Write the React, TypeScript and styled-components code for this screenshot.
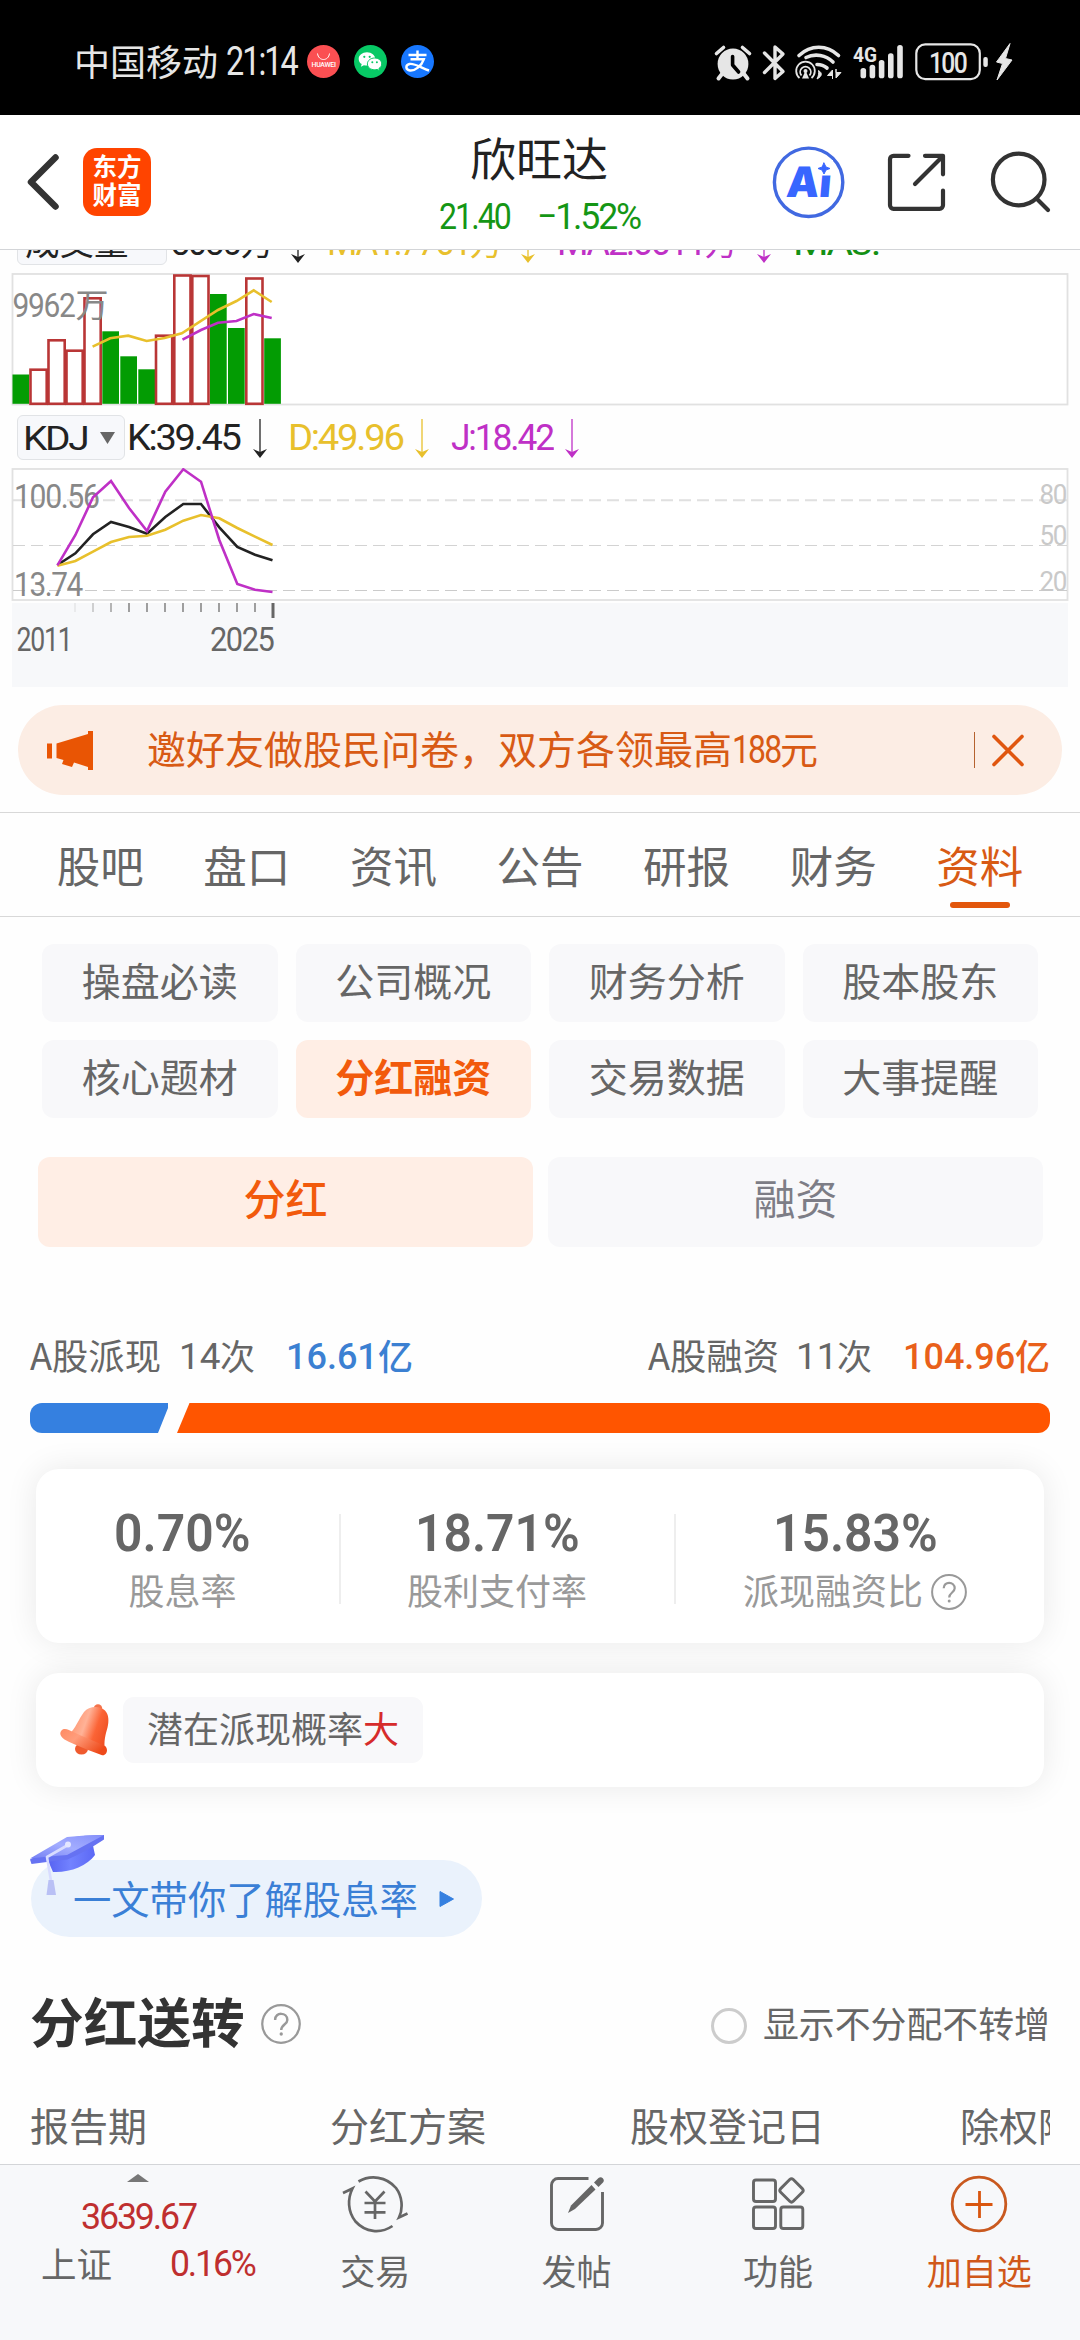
import React, { useLayoutEffect, useRef, useState } from "react";
import styled, { createGlobalStyle, css } from "styled-components";

const CJK = `"Noto Sans CJK SC", "Noto Sans", sans-serif`;
const NUM = `Roboto, "Noto Sans CJK SC", sans-serif`;

const Global = createGlobalStyle`
  * { box-sizing: border-box; }
  body { margin: 0; background: #fff; font-family: ${CJK}; color: #666; }
  svg { display: block; flex: none; }
`;

const Screen = styled.div`
  width: 1080px;
  height: 2340px;
  overflow: hidden;
  display: flex;
  flex-direction: column;
  background: #fefefe;
`;

/* ---------- Fitted text ---------- */
const FitBox = styled.span<{ $w: number; $ml?: number }>`
  display: block;
  flex: none;
  width: ${(p) => p.$w}px;
  margin-left: ${(p) => p.$ml ?? 0}px;
`;
const FitInner = styled.span<{ $size: number; $weight: number; $color?: string; $track: number; $family: string }>`
  display: block;
  width: max-content;
  white-space: nowrap;
  transform-origin: 0 50%;
  font-family: ${(p) => p.$family};
  font-size: ${(p) => p.$size}px;
  font-weight: ${(p) => p.$weight};
  line-height: 1;
  letter-spacing: ${(p) => p.$track}em;
  color: ${(p) => p.$color ?? "inherit"};
`;

type FitProps = {
  w: number;
  size: number;
  ml?: number;
  weight?: number;
  color?: string;
  track?: number;
  family?: string;
  children: React.ReactNode;
};

function Fit({ w, size, ml, weight = 400, color, track = -0.06, family = NUM, children }: FitProps) {
  const ref = useRef<HTMLSpanElement>(null);
  const [k, setK] = useState(1);
  useLayoutEffect(() => {
    if (ref.current) setK(w / ref.current.offsetWidth);
  }, [w, size, children]);
  return (
    <FitBox $w={w} $ml={ml}>
      <FitInner ref={ref} $size={size} $weight={weight} $color={color} $track={track} $family={family} style={{ transform: `scaleX(${k})` }}>
        {children}
      </FitInner>
    </FitBox>
  );
}

const Cn = styled.span<{ $size: number; $weight?: number; $color?: string; $ml?: number; $up?: number }>`
  display: block;
  flex: none;
  white-space: nowrap;
  font-size: ${(p) => p.$size}px;
  font-weight: ${(p) => p.$weight ?? 400};
  line-height: 1;
  color: ${(p) => p.$color ?? "inherit"};
  margin-left: ${(p) => p.$ml ?? 0}px;
  padding-bottom: ${(p) => p.$up ?? 0}px;
`;

/* ---------- Status bar ---------- */
const StatusBar = styled.div`
  height: 115px;
  flex: none;
  background: #000;
  color: #e6e6e6;
  display: flex;
  align-items: center;
  padding: 8px 67px 0 74px;
`;
const StatusApps = styled.div`
  display: flex;
  gap: 14px;
  margin-left: 10px;
`;
const StatusRight = styled.div`
  margin-left: auto;
  display: flex;
  align-items: center;
`;

function StatusIcons() {
  const bars = [
    [860.5, 67],
    [869.6, 63.7],
    [878.8, 59],
    [888, 52.3],
    [897.2, 44],
  ];
  return (
    <svg width="300" height="40" viewBox="713 41 300 40" fill="none" stroke="#e6e6e6">
      <circle cx="733" cy="63" r="15.4" fill="#e6e6e6" stroke="none" />
      <path d="M716.5 52.5l7-6M749.5 52.5l-7-6" strokeWidth="3.6" strokeLinecap="round" />
      <path d="M722 73l-3.5 4.5M744 73l3.5 4.5" strokeWidth="4" strokeLinecap="round" />
      <path d="M732.6 55.5v8.5l6 7" stroke="#000" strokeWidth="3.6" strokeLinecap="round" strokeLinejoin="round" />
      <path d="M764.5 52l18.5 18.5-8 7V46l8 7L764.5 71.5" strokeWidth="3.4" strokeLinejoin="round" strokeLinecap="round" />
      <path d="M799 54.5c11.5-11 28-11 39.5 0" strokeWidth="3.6" strokeLinecap="round" />
      <path d="M806 56.5c9-4.5 20-2.500 27 4.500" strokeWidth="3.6" strokeLinecap="round" />
      <path d="M817 63.5c4 0 7 1 10 3.500" strokeWidth="3.6" strokeLinecap="round" />
      <path d="M799.5 77a9.300 9.300 0 1 1 12 0" strokeWidth="1.8" />
      <path d="M801.5 74.500a5.300 5.300 0 1 1 8 0" strokeWidth="1.8" />
      <path d="M805.5 69.500l3.500 8h-7z" fill="#e6e6e6" stroke="none" />
      <circle cx="805.5" cy="70" r="2" fill="#e6e6e6" stroke="none" />
      <path d="M818.5 69.500c4 2.500 4 5.500-1.500 8.500 1.500-3 2-5.500 1.500-8.500z" fill="#e6e6e6" strokeWidth="1" />
      <path d="M832.5 78v-9l-5 5.500h5zM836 68v9l5-5.500h-5z" fill="#e6e6e6" strokeWidth="1" />
      <text x="853" y="60.5" fontFamily="Roboto" fontWeight="700" fontSize="20.5" textLength="24" lengthAdjust="spacingAndGlyphs" fill="#e6e6e6" stroke="none">
        4G
      </text>
      {bars.map(([x, y]) => (
        <rect key={x} x={x} y={y} width="5.6" height={77.3 - y} rx="2.6" fill="#e6e6e6" stroke="none" />
      ))}
      <rect x="916.3" y="43.3" width="63.5" height="34.8" rx="9" strokeWidth="2.2" />
      <rect x="983.3" y="56" width="4.5" height="10" rx="2" fill="#e6e6e6" stroke="none" />
      <text x="929" y="71.7" fontFamily="Roboto" fontWeight="500" fontSize="29.5" letterSpacing="-2" textLength="37" lengthAdjust="spacingAndGlyphs" fill="#e6e6e6" stroke="none">
        100
      </text>
      <path d="M1010 42.5l-13.5 18.500 6 1.500-5.500 16.500 15-20-6.500-1.500z" fill="#e6e6e6" strokeWidth="1" strokeLinejoin="round" />
    </svg>
  );
}

const AppDots = () => (
  <>
    <svg width="33" height="33" viewBox="0 0 33 33">
      <circle cx="16.5" cy="16.5" r="16.5" fill="#fb4f52" />
      <path d="M10.5 8.500c1 8 11 8 12 0" fill="none" stroke="#fff" strokeWidth="1" />
      <text x="4.5" y="22" fontFamily="Roboto" fontSize="7" fontWeight="500" textLength="24.5" fill="#fff">
        HUAWEI
      </text>
    </svg>
    <svg width="33" height="33" viewBox="0 0 33 33">
      <circle cx="16.5" cy="16.5" r="16.5" fill="#07c965" />
      <path d="M13 7.200c-4.700 0-8.300 3-8.300 6.700 0 2.200 1.100 4 3 5.200l-.8 2.600 3-1.500c1 .3 2 .4 3 .4 4.700 0 8.300-3 8.300-6.700S17.700 7.200 13 7.200z" fill="#fff" />
      <path d="M20.600 13c-4 0-7.200 2.600-7.200 5.900s3.200 5.900 7.200 5.900c.9 0 1.700-.1 2.500-.4l2.500 1.300-.7-2.200c1.700-1.100 2.800-2.700 2.800-4.600 0-3.300-3.100-5.900-7.100-5.900z" fill="#fff" stroke="#07c965" strokeWidth="1" />
      <g fill="#07c965">
        <circle cx="10.3" cy="11.8" r="1.1" />
        <circle cx="15.7" cy="11.8" r="1.1" />
        <circle cx="18.3" cy="17.2" r="1" />
        <circle cx="22.9" cy="17.2" r="1" />
      </g>
    </svg>
    <svg width="33" height="33" viewBox="0 0 33 33">
      <circle cx="16.5" cy="16.5" r="16.5" fill="#1777ff" />
      <g fill="none" stroke="#fff" strokeWidth="2.4">
        <path d="M7.5 10h18M16.5 5.500V14M9.500 14.300h13.300C20.500 21 14 26 9 25.500c-4.500-.5-5-5.500-.5-6.500 5-1 12 4 19.500 6.500" />
      </g>
    </svg>
  </>
);

/* ---------- Header ---------- */
const Header = styled.header`
  height: 135px;
  flex: none;
  display: grid;
  grid-template-columns: 1fr auto 1fr;
  align-items: center;
  background: #fff;
  border-bottom: 1px solid #d3d5d8;
`;
const HeaderLeft = styled.div`
  display: flex;
  align-items: center;
  padding-left: 26px;
  gap: 23px;
`;
const Logo = styled.div`
  width: 68px;
  height: 68px;
  border-radius: 14px;
  background: #ff4400;
  color: #fff;
  font-size: 24.5px;
  font-weight: 700;
  line-height: 28px;
  text-align: center;
  padding-top: 4px;
`;
const HeaderTitle = styled.div`
  display: flex;
  flex-direction: column;
  align-items: center;
  gap: 19px;
  padding: 3px 2px 0 0;
`;
const QuoteRow = styled.div`
  display: flex;
  width: 201px;
  height: 36px;
  align-items: center;
  justify-content: space-between;
  color: #159615;
`;
const HeaderRight = styled.div`
  display: flex;
  align-items: center;
  justify-content: flex-end;
  padding-right: 29px;
`;

function HeaderIcons() {
  return (
    <svg width="280" height="76" viewBox="771 144 280 76" fill="none" stroke="#333" strokeWidth="4.2" strokeLinecap="round" strokeLinejoin="round">
      <circle cx="808.6" cy="182.3" r="34.2" stroke="#4169e1" strokeWidth="3.4" />
      <g transform="translate(785.5 196.5) skewX(-5)">
        <text x="0" y="0" fontFamily="Inter" fontWeight="900" fontSize="42" textLength="45" lengthAdjust="spacingAndGlyphs" fill="#3866ff" stroke="none">
          Ai
        </text>
      </g>
      <rect x="815" y="160" width="18" height="15.5" fill="#fff" stroke="none" />
      <path d="M824 163l2 4 4 1.500-4 1.500-2 4-2-4-4-1.500 4-1.500z" fill="#3866ff" stroke="#3866ff" strokeWidth="1" />
      <path d="M908.5 155.800h-15a3.500 3.500 0 0 0-3.500 3.500v46a3.500 3.500 0 0 0 3.500 3.500h46a3.500 3.500 0 0 0 3.500-3.500V190.500M925 155.800h18v18.500M942 157l-27 27" />
      <circle cx="1018.7" cy="179.5" r="25.8" />
      <path d="M1036.5 198.500l11.500 11.500" />
    </svg>
  );
}

/* ---------- Indicator legends ---------- */
const LegendClip = styled.div`
  height: 23px;
  flex: none;
  overflow: hidden;
  display: flex;
  align-items: flex-end;
  padding-bottom: 8px;
`;
const LegendRow = styled.div<{ $mt?: number; $mb?: number }>`
  height: 45px;
  flex: none;
  display: flex;
  align-items: center;
  padding-left: 17px;
  margin-top: ${(p) => p.$mt ?? 0}px;
  margin-bottom: ${(p) => p.$mb ?? 0}px;
`;
const Picker = styled.div<{ $w: number }>`
  width: ${(p) => p.$w}px;
  height: 45px;
  flex: none;
  border: 1px solid #e1e3e6;
  border-radius: 6px;
  background: #f7f8fb;
  display: flex;
  align-items: center;
  justify-content: space-between;
  padding: 0 9px 0 5px;
  color: #222;
`;
const ArrowSvg = styled.svg<{ $ml: number }>`
  margin-left: ${(p) => p.$ml}px;
`;
const DownArrow = ({ color, ml }: { color: string; ml: number }) => (
  <ArrowSvg $ml={ml} width="14" height="40" viewBox="0 0 14 40">
    <path d="M7 1v36" stroke={color} strokeWidth="1.3" />
    <path d="M0 31l7 3 7-3-7 9z" fill={color} />
  </ArrowSvg>
);
const Triangle = () => (
  <svg width="15" height="12" viewBox="0 0 15 12">
    <path d="M0 0h15L7.5 12z" fill="#666" />
  </svg>
);

const Y = "#e8c02c";
const P = "#bf30c6";
const G = "#149014";
const K = "#222";

/* ---------- Charts ---------- */
const bars: [number, number, boolean][] = [
  [12.5, 374.5, false],
  [30.5, 368.7, true],
  [48.5, 339.3, true],
  [66.5, 349.7, true],
  [84.5, 297.3, true],
  [102.3, 331.3, false],
  [120.3, 356.3, false],
  [138.3, 369.3, false],
  [156, 334.7, true],
  [174.3, 274.5, true],
  [192.3, 275, true],
  [210, 294, false],
  [228, 328, false],
  [246.3, 277.5, true],
  [264.2, 338.3, false],
];

const Label = ({ x, y, w, size = 33, fill = "#888", children }: { x: number; y: number; w: number; size?: number; fill?: string; children: string }) => (
  <text x={x} y={y} textLength={w} lengthAdjust="spacingAndGlyphs" letterSpacing="-1.5" fontFamily="Roboto" fontWeight="400" fontSize={size} fill={fill}>
    {children}
  </text>
);

function VolumeChart() {
  return (
    <svg width="1080" height="133" viewBox="0 273 1080 133">
      <rect x="12.5" y="274" width="1055" height="130.5" fill="#fff" stroke="#e1e1e1" strokeWidth="1.8" />
      {bars.map(([x, y, up]) =>
        up ? (
          <rect key={x} x={x} y={y + 1} width="16.2" height={402.8 - y} fill="#fff" stroke="#b93636" strokeWidth="2.6" />
        ) : (
          <rect key={x} x={x} y={y} width="16.7" height={403.8 - y} fill="#039c03" />
        )
      )}
      <Label x={12.5} y={317.3} w={62} size={34}>9962</Label>
      <text x="75.5" y="317" fontFamily="Noto Sans CJK SC" fontSize="33" fill="#888">万</text>
      <polyline fill="none" stroke={Y} strokeWidth="2.6" points="92.6,346.7 110.2,338.3 128.2,335.7 146.6,341 164.6,338 181.8,333.3 218,310 236.5,301 253.7,290.3 271.7,302" />
      <polyline fill="none" stroke={P} strokeWidth="2.6" points="182.5,339.7 201,330 218,322.7 236.5,321 253.7,314 271.7,318" />
    </svg>
  );
}

function KdjChart() {
  return (
    <svg width="1080" height="219" viewBox="0 468 1080 219">
      <rect x="12.5" y="469" width="1055" height="131" fill="#fff" stroke="#e1e1e1" strokeWidth="1.8" />
      <path d="M13 500.200h1054" stroke="#e0e0e0" strokeWidth="2" strokeDasharray="12 6" />
      <path d="M13 545.500h1054" stroke="#d3d3d3" strokeWidth="1.2" strokeDasharray="12 6" />
      <path d="M13 590.500h1054" stroke="#cbcbcb" strokeWidth="1.2" strokeDasharray="12 6" />
      <rect x="12" y="603" width="1056" height="84" fill="#f7f8fa" />
      {Array.from({ length: 11 }, (_, i) => (
        <path key={i} d={`M${75 + i * 18} 603v9`} stroke="#888" strokeWidth="1.6" opacity={Math.min(1, 0.15 + i * 0.3)} />
      ))}
      <path d="M273 603v15" stroke="#666" strokeWidth="3" />
      <Label x={14} y={507.7} w={84.5}>100.56</Label>
      <Label x={14} y={595.7} w={68}>13.74</Label>
      <g fill="none" strokeWidth="2.6">
        <polyline stroke={K} points="57.4,565 75.4,553.3 93,534.3 111,522 129,527 147,533.7 165.3,517 183.3,504 201,504 219.3,527.3 237.3,547 255,554.7 272.5,560.3" />
        <polyline stroke={Y} points="57.4,565.7 75.4,561 93,551.7 111,542 129,537 147,535.7 165.3,529.7 183.3,520.7 201,515 219.3,518.3 237.3,528 255,536.7 272.5,545" />
        <polyline stroke={P} points="57.4,565.3 75.4,535 93,497.3 111,481 129,508 147,531 165.3,491.7 183.3,469.3 201,481.7 219.3,540 237.3,584 255,589.7 272.5,592" />
      </g>
      <Label x={1039.5} y={504} w={26.5} size={28.5} fill="#c9c9c9">80</Label>
      <Label x={1039.5} y={545.3} w={26.5} size={28.5} fill="#c9c9c9">50</Label>
      <Label x={1039.5} y={591} w={26.5} size={28.5} fill="#c9c9c9">20</Label>
      <Label x={16.5} y={651} w={55} fill="#666">2011</Label>
      <Label x={210} y={651} w={63.5} fill="#666">2025</Label>
    </svg>
  );
}

/* ---------- Banner ---------- */
const Banner = styled.div`
  height: 90px;
  flex: none;
  margin: 18px 18px 17px;
  border-radius: 45px;
  background: #fcede4;
  color: #d85a14;
  display: flex;
  align-items: center;
  padding: 0 38px 0 29px;
`;
const BannerText = styled.div`
  display: flex;
  align-items: center;
  margin-left: 54px;
`;
const BannerEnd = styled.div`
  margin-left: auto;
  display: flex;
  align-items: center;
  gap: 17px;
  &::before {
    content: "";
    width: 1px;
    height: 36px;
    background: #b5622f;
  }
`;

/* ---------- Tabs ---------- */
const Tabs = styled.nav`
  height: 105px;
  flex: none;
  display: flex;
  padding: 0 27px;
  border-top: 1px solid #d8d8d8;
  border-bottom: 1px solid #d8d8d8;
`;
const Tab = styled.div<{ $on?: boolean }>`
  flex: 1;
  display: flex;
  flex-direction: column;
  align-items: center;
  padding-top: 30px;
  font-size: 43.5px;
  line-height: 44px;
  color: ${(p) => (p.$on ? "#d85a14" : "#666")};
  ${(p) =>
    p.$on &&
    css`
      &::after {
        content: "";
        width: 60px;
        height: 6px;
        margin-top: 15px;
        border-radius: 3px;
        background: #e2560c;
      }
    `}
`;

/* ---------- Chips ---------- */
const ChipGrid = styled.div`
  flex: none;
  display: grid;
  grid-template-columns: repeat(4, 1fr);
  gap: 18px;
  padding: 27px 42px 39px;
`;
const Chip = styled.div<{ $on?: boolean }>`
  height: 78px;
  border-radius: 12px;
  display: flex;
  align-items: center;
  justify-content: center;
  padding-bottom: 8px;
  font-size: 39px;
  line-height: 1;
  background: ${(p) => (p.$on ? "#ffeee5" : "#f8f8fa")};
  color: ${(p) => (p.$on ? "#f25a0c" : "#666")};
  font-weight: ${(p) => (p.$on ? 700 : 400)};
`;
const Segments = styled.div`
  flex: none;
  display: grid;
  grid-template-columns: 1fr 1fr;
  gap: 15px;
  padding: 0 37px 0 38px;
`;
const Segment = styled(Chip)`
  height: 90px;
  font-size: 42px;
  padding-bottom: 10px;
  color: ${(p) => (p.$on ? "#f25a0c" : "#7d7d86")};
  font-weight: ${(p) => (p.$on ? 500 : 400)};
`;

/* ---------- Summary ---------- */
const SummaryRow = styled.div`
  height: 48px;
  flex: none;
  margin-top: 86px;
  display: flex;
  justify-content: space-between;
  padding: 0 30px;
`;
const SummarySide = styled.div`
  display: flex;
  align-items: center;
`;
const RatioBar = styled.div`
  height: 30px;
  flex: none;
  margin: 22px 30px 0;
  display: flex;
  border-radius: 12px;
  overflow: hidden;
`;
const RatioPart = styled.div<{ $kind: "paid" | "raised" }>`
  ${(p) =>
    p.$kind === "paid"
      ? css`
          width: 138px;
          background: #3580e0;
          clip-path: polygon(0 0, 100% 0, 100% 17%, 128px 100%, 0 100%);
        `
      : css`
          flex: 1;
          margin-left: 9px;
          background: #ff5500;
          clip-path: polygon(12.5px 0, 100% 0, 100% 100%, 0 100%);
        `}
`;

const Card = styled.section<{ $mt: number; $h: number; $pl?: number }>`
  flex: none;
  height: ${(p) => p.$h}px;
  margin: ${(p) => p.$mt}px 36px 0;
  padding-left: ${(p) => p.$pl ?? 0}px;
  border-radius: 23px;
  background: #fff;
  box-shadow: 0 0 32px rgba(0, 0, 0, 0.085);
  display: flex;
  align-items: center;
`;
const Stat = styled.div<{ $w: number; $ml?: number }>`
  width: ${(p) => p.$w}px;
  margin-left: ${(p) => p.$ml ?? 0}px;
  flex: none;
  height: 100%;
  padding-top: 39px;
  display: flex;
  flex-direction: column;
  align-items: center;
  gap: 12px;
`;
const StatLabel = styled.div`
  display: flex;
  align-items: center;
  color: #999;
  height: 36px;
`;
const Rule = styled.div<{ $ml: number }>`
  width: 2px;
  height: 90px;
  margin: 6px 0 0 ${(p) => p.$ml}px;
  background: #eeeeee;
`;
const HintChip = styled.div`
  display: flex;
  align-items: center;
  width: 300px;
  height: 66px;
  margin-left: 13px;
  padding: 0 0 7px 24px;
  border-radius: 11px;
  background: #f8f8fa;
`;

const HelpSvg = styled.svg<{ $ml: number; $mt: number }>`
  margin: ${(p) => p.$mt}px 0 0 ${(p) => p.$ml}px;
`;
const Help = ({ size, ml, mt = 0 }: { size: number; ml: number; mt?: number }) => (
  <HelpSvg $ml={ml} $mt={mt} width={size} height={size} viewBox="0 0 36 36" fill="none" stroke="#999" strokeWidth="2">
    <circle cx="18" cy="18" r="16.9" />
    <path d="M12.7 14.300c0-7.500 11-7 11 0 0 4.300-5.500 4.200-5.500 9.200" strokeWidth="2.2" />
    <circle cx="18.2" cy="27" r="1.5" fill="#999" stroke="none" />
  </HelpSvg>
);

const Bell = () => (
  <svg width="50" height="52" viewBox="60 1704.5 50 52">
    <defs>
      <linearGradient id="bell" x1="0" y1="0.2" x2="1" y2="0.6">
        <stop offset="0.15" stopColor="#ff9a76" />
        <stop offset="0.42" stopColor="#ffb297" />
        <stop offset="0.7" stopColor="#fb6436" />
        <stop offset="1" stopColor="#ee4f22" />
      </linearGradient>
      <linearGradient id="rim" x1="0" y1="0" x2="1" y2="0.6">
        <stop offset="0" stopColor="#ff8a62" />
        <stop offset="0.4" stopColor="#ff9d7c" />
        <stop offset="1" stopColor="#ee4a1a" />
      </linearGradient>
    </defs>
    <ellipse cx="81.5" cy="1749.5" rx="6.5" ry="5.5" fill="#ef5a2e" />
    <circle cx="98" cy="1709" r="4.2" fill="#f4734b" />
    <path d="M84 1712.500c5-6.500 16-6.500 21-1.500 4 4 4 11 2.500 17-2 7-4 14-2.500 23L69 1735c6-5 10-16 15-22.500z" fill="url(#bell)" />
    <path d="M61.5 1731c-2.500 3-1 6.500 3 9 11 6 25 11 37 15.500 5 1.500 7.500-6 3.500-9-10-5-22-9-32-14-4-2-8.500-4.500-11.500-1.500z" fill="url(#rim)" />
  </svg>
);

/* ---------- Guide link ---------- */
const GuideLink = styled.div`
  position: relative;
  flex: none;
  width: 451px;
  height: 77px;
  margin: 73px 0 0 31px;
  border-radius: 39px;
  background: #eaf2fc;
  display: flex;
  align-items: center;
  gap: 21px;
  padding: 0 0 0 42px;
`;
const CapBadge = styled.div`
  position: absolute;
  left: -1px;
  top: -25px;
`;
const Cap = () => (
  <svg width="74" height="61" viewBox="30 1835 74 61">
    <defs>
      <linearGradient id="capTop" x1="0" y1="1" x2="1" y2="0">
        <stop offset="0" stopColor="#7580f4" />
        <stop offset="0.5" stopColor="#a3adff" />
        <stop offset="1" stopColor="#8590fa" />
      </linearGradient>
      <linearGradient id="capBase" x1="0" y1="0" x2="1" y2="0">
        <stop offset="0" stopColor="#5560f0" />
        <stop offset="0.5" stopColor="#7282ff" />
        <stop offset="1" stopColor="#5c68f5" />
      </linearGradient>
    </defs>
    <path d="M46 1856l46-15 3 14c-8 11-26 18-42 17z" fill="url(#capBase)" />
    <path d="M30 1859.500l38-21.500q17-3 36-3v4.500q-18 12-36.500 20-17 2-36 4.500z" fill="#6672f2" />
    <path d="M30 1858.500l37-21.500q18-2 37-2l-37 20q-18 1-37 3.500z" fill="url(#capTop)" />
    <path d="M68 1845l-21 12 4 24" fill="none" stroke="#d8dcff" strokeWidth="2.6" strokeLinejoin="round" />
    <circle cx="68" cy="1844.5" r="3" fill="#e4e7ff" />
    <path d="M48.5 1880h5l2.500 15h-9.500z" fill="#b9c0f5" />
  </svg>
);

/* ---------- Section ---------- */
const SectionHead = styled.div`
  height: 60px;
  flex: none;
  margin-top: 56px;
  display: flex;
  align-items: center;
  padding: 0 30px;
`;
const Toggle = styled.div`
  margin-left: auto;
  display: flex;
  align-items: center;
`;
const Radio = styled.span`
  width: 36px;
  height: 36px;
  border: 3px solid #ccc;
  border-radius: 50%;
  margin-top: 5px;
`;
const TableHead = styled.div`
  height: 60px;
  flex: none;
  margin: 44px 30px 7px;
  display: grid;
  grid-template-columns: 300px 300px 330px 300px;
  align-items: center;
  overflow: hidden;
`;

/* ---------- Bottom bar ---------- */
const BottomBar = styled.footer`
  flex: none;
  height: 176px;
  border-top: 1px solid #d3d5d8;
  background: #f7f8fa;
  display: flex;
`;
const IndexBox = styled.div`
  width: 274.5px;
  flex: none;
  display: flex;
  flex-direction: column;
  padding-top: 9px;
`;
const CaretRow = styled.div`
  padding-left: 127px;
`;
const IndexRow = styled.div<{ $mt: number }>`
  display: flex;
  align-items: center;
  height: 36px;
  margin-top: ${(p) => p.$mt}px;
`;
const Action = styled.div<{ $on?: boolean }>`
  flex: 1;
  display: flex;
  flex-direction: column;
  align-items: center;
  padding-top: 8px;
  gap: 17px;
  font-size: 35px;
  line-height: 36px;
  color: ${(p) => (p.$on ? "#d0581a" : "#666")};
`;

const TradeIcon = () => (
  <svg width="66" height="62" viewBox="342.5 2173 66 62" fill="none" stroke="#666" strokeWidth="2.7">
    <path d="M359 2181.500c12-7 28-5 37.500 6.500 6 8 7.500 20 3 29.500l8.500-4" />
    <path d="M393 2226c-12 8-27 6.500-37-4.500-8-10-8-23-3-33l-9.500 4.500" />
    <path d="M366 2191.500l9.500 10 9.500-10M365 2203h21M365 2212.300h21M375.500 2201v18" />
  </svg>
);
const PostIcon = () => (
  <svg width="56" height="62" viewBox="549 2173 56 62" fill="none" stroke="#666" strokeWidth="2.9">
    <path d="M588.5 2178.500H558a6.500 6.500 0 0 0-6.500 6.500v38a6.500 6.500 0 0 0 6.500 6.500h38a6.500 6.500 0 0 0 6.500-6.500v-31" />
    <path d="M568 2213l3-7.500 20.500-20.500 4 4.500L575 2209z" fill="#666" stroke="none" />
    <path d="M594 2182.500l4.500-4.500c3-2.500 7 1.500 4.500 4.500l-4.500 4.500z" fill="#666" stroke="none" />
  </svg>
);
const GridIcon = () => (
  <svg width="54" height="62" viewBox="751 2173 54 62" fill="none" stroke="#666" strokeWidth="2.9">
    <rect x="753.5" y="2180" width="22" height="21.5" rx="2.5" />
    <rect x="753.5" y="2207" width="22" height="21.5" rx="2.5" />
    <rect x="780.8" y="2207" width="22" height="21.5" rx="2.5" />
    <rect x="782.6" y="2181.5" width="17.8" height="17.8" rx="2.5" transform="rotate(45 791.5 2190.4)" />
  </svg>
);
const AddIcon = () => (
  <svg width="60" height="62" viewBox="949 2173 60 62" fill="none" stroke="#c9591f" strokeWidth="2.8">
    <circle cx="979" cy="2204" r="26.8" />
    <path d="M965.5 2204.500h27M979.500 2191v27" stroke="#d9560f" />
  </svg>
);

const chips = ["操盘必读", "公司概况", "财务分析", "股本股东", "核心题材", "分红融资", "交易数据", "大事提醒"];

export default function App() {
  return (
    <>
      <Global />
      <Screen>
        <StatusBar>
          <Cn $size={36} $up={3}>中国移动</Cn>
          <Fit w={71} size={41} ml={8}>21:14</Fit>
          <StatusApps>
            <AppDots />
          </StatusApps>
          <StatusRight>
            <StatusIcons />
          </StatusRight>
        </StatusBar>

        <Header>
          <HeaderLeft>
            <svg width="34" height="58" viewBox="0 0 34 58" fill="none" stroke="#333" strokeWidth="6.5" strokeLinecap="round" strokeLinejoin="round">
              <path d="M29.5 4.500L5 29l24.500 24.500" />
            </svg>
            <Logo>
              东方
              <br />
              财富
            </Logo>
          </HeaderLeft>
          <HeaderTitle>
            <Cn $size={46} $color="#222">欣旺达</Cn>
            <QuoteRow>
              <Fit w={71} size={37}>21.40</Fit>
              <Fit w={103} size={37}>−1.52%</Fit>
            </QuoteRow>
          </HeaderTitle>
          <HeaderRight>
            <HeaderIcons />
          </HeaderRight>
        </Header>

        <LegendClip>
          <LegendRow>
            <Picker $w={150}>
              <Cn $size={34.5} $up={4} $ml={2}>成交量</Cn>
              <Triangle />
            </Picker>
            <Fit w={68} size={36} ml={4} color={K}>8085</Fit>
            <Cn $size={33} $color={K} $ml={2} $up={2}>万</Cn>
            <DownArrow color={K} ml={17} />
            <Fit w={143} size={36} ml={22} color={Y}>MA1:7761</Fit>
            <Cn $size={33} $color={Y} $up={2}>万</Cn>
            <DownArrow color={Y} ml={18} />
            <Fit w={148} size={36} ml={22} color={P}>MA2:6611</Fit>
            <Cn $size={33} $color={P} $up={2}>万</Cn>
            <DownArrow color={P} ml={19} />
            <Fit w={86} size={36} ml={22} color={G}>MA3:</Fit>
          </LegendRow>
        </LegendClip>
        <VolumeChart />
        <LegendRow $mt={9} $mb={8}>
          <Picker $w={108}>
            <Fit w={64} size={34}>KDJ</Fit>
            <Triangle />
          </Picker>
          <Fit w={113} size={36} ml={2} color={K}>K:39.45</Fit>
          <DownArrow color={K} ml={13} />
          <Fit w={115} size={36} ml={21} color={Y}>D:49.96</Fit>
          <DownArrow color={Y} ml={12} />
          <Fit w={102} size={36} ml={22} color={P}>J:18.42</Fit>
          <DownArrow color={P} ml={12} />
        </LegendRow>
        <KdjChart />

        <Banner>
          <svg width="46" height="39" viewBox="0 0 46 39" fill="#e95504">
            <path d="M0 12.500h5v15H0zM9.500 12.500L41 3V0h5v39h-5v-3l-14-4.500-2 4.500-10-3 1.500-4-7-2z" />
          </svg>
          <BannerText>
            <Cn $size={39} $up={5}>邀好友做股民问卷，双方各领最高</Cn>
            <Fit w={48} size={38}>188</Fit>
            <Cn $size={38} $up={5}>元</Cn>
          </BannerText>
          <BannerEnd>
            <svg width="32" height="33" viewBox="0 0 32 33" stroke="#e0560f" strokeWidth="3.6" strokeLinecap="round">
              <path d="M2 2.500l28 28M30 2.500l-28 28" />
            </svg>
          </BannerEnd>
        </Banner>

        <Tabs>
          {["股吧", "盘口", "资讯", "公告", "研报", "财务", "资料"].map((t) => (
            <Tab key={t} $on={t === "资料"}>{t}</Tab>
          ))}
        </Tabs>

        <ChipGrid>
          {chips.map((t) => (
            <Chip key={t} $on={t === "分红融资"}>{t}</Chip>
          ))}
        </ChipGrid>
        <Segments>
          <Segment $on>分红</Segment>
          <Segment>融资</Segment>
        </Segments>

        <SummaryRow>
          <SummarySide>
            <Cn $size={36.3} $up={5}>A股派现</Cn>
            <Fit w={41} size={36} ml={18} track={0}>14</Fit>
            <Cn $size={35} $up={5}>次</Cn>
            <Fit w={92} size={36} ml={31} weight={500} track={0} color="#3b80d2">16.61</Fit>
            <Cn $size={35} $up={5} $weight={500} $color="#3b80d2">亿</Cn>
          </SummarySide>
          <SummarySide>
            <Cn $size={36.3} $up={5}>A股融资</Cn>
            <Fit w={41} size={36} ml={17} track={0}>11</Fit>
            <Cn $size={35} $up={5}>次</Cn>
            <Fit w={112} size={36} ml={31} weight={500} track={0} color="#e9601a">104.96</Fit>
            <Cn $size={35} $up={5} $weight={500} $color="#e9601a">亿</Cn>
          </SummarySide>
        </SummaryRow>
        <RatioBar>
          <RatioPart $kind="paid" />
          <RatioPart $kind="raised" />
        </RatioBar>

        <Card $mt={36} $h={174}>
          <Stat $w={293}>
            <Fit w={137} size={51} weight={600} track={0}>0.70%</Fit>
            <StatLabel><Cn $size={36}>股息率</Cn></StatLabel>
          </Stat>
          <Rule $ml={10} />
          <Stat $w={312}>
            <Fit w={165} size={51} weight={600} track={0}>18.71%</Fit>
            <StatLabel><Cn $size={36}>股利支付率</Cn></StatLabel>
          </Stat>
          <Rule $ml={21} />
          <Stat $w={358}>
            <Fit w={165} size={51} weight={600} track={0}>15.83%</Fit>
            <StatLabel>
              <Cn $size={36}>派现融资比</Cn>
              <Help size={36} ml={8} mt={5} />
            </StatLabel>
          </Stat>
        </Card>

        <Card $mt={30} $h={114} $pl={24}>
          <Bell />
          <HintChip>
            <Cn $size={36}>潜在派现概率</Cn>
            <Cn $size={36} $color="#d62b2b">大</Cn>
          </HintChip>
        </Card>

        <GuideLink>
          <CapBadge><Cap /></CapBadge>
          <Cn $size={38.3} $color="#3a7fd6">一文带你了解股息率</Cn>
          <svg width="16" height="18" viewBox="0 0 16 18">
            <path d="M1 1.500L14.500 9 1 16.500z" fill="#3580e0" stroke="#3580e0" strokeLinejoin="round" />
          </svg>
        </GuideLink>

        <SectionHead>
          <Cn $size={53.7} $weight={700} $color="#333" $up={7}>分红送转</Cn>
          <Help size={40} ml={16} mt={1} />
          <Toggle>
            <Radio />
            <Cn $size={35.9} $ml={16}>显示不分配不转增</Cn>
          </Toggle>
        </SectionHead>

        <TableHead>
          <Cn $size={39} $up={5}>报告期</Cn>
          <Cn $size={39} $up={5}>分红方案</Cn>
          <Cn $size={39} $up={5}>股权登记日</Cn>
          <Cn $size={39} $up={5}>除权除息日</Cn>
        </TableHead>

        <BottomBar>
          <IndexBox>
            <CaretRow>
              <svg width="22" height="8" viewBox="0 0 22 8">
                <path d="M0 8L11 0l11 8z" fill="#777" />
              </svg>
            </CaretRow>
            <IndexRow $mt={16}>
              <Fit w={115} size={37} ml={81} color="#bf2f2f">3639.67</Fit>
            </IndexRow>
            <IndexRow $mt={12}>
              <Cn $size={35.5} $ml={41} $up={3}>上证</Cn>
              <Fit w={85} size={36} ml={58} color="#bf2f2f">0.16%</Fit>
            </IndexRow>
          </IndexBox>
          <Action><TradeIcon />交易</Action>
          <Action><PostIcon />发帖</Action>
          <Action><GridIcon />功能</Action>
          <Action $on><AddIcon />加自选</Action>
        </BottomBar>
      </Screen>
    </>
  );
}
